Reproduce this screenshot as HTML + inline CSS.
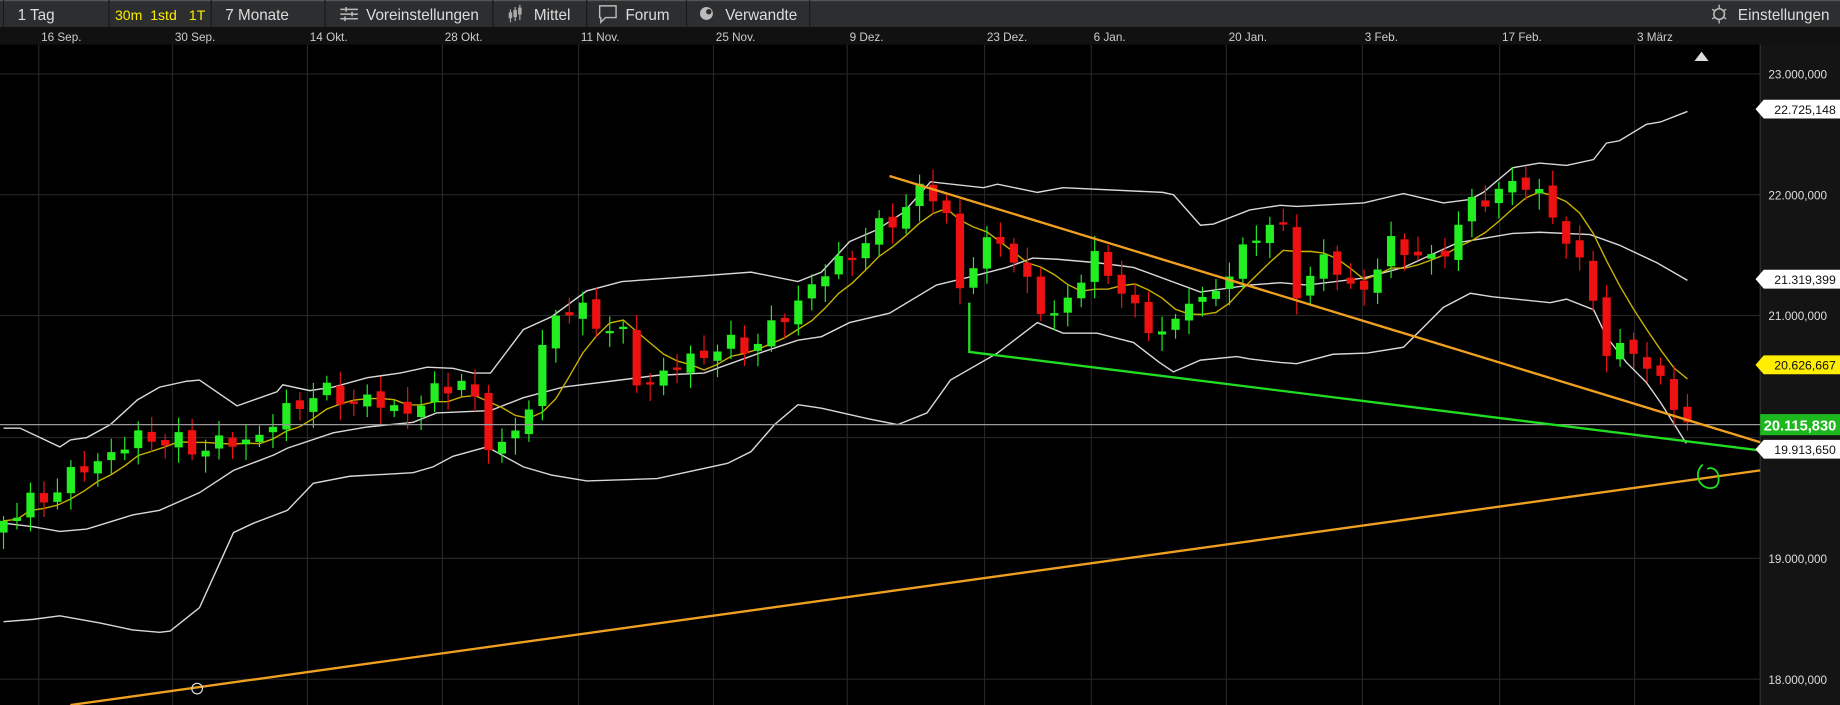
<!DOCTYPE html>
<html><head><meta charset="utf-8"><style>
html,body{margin:0;padding:0;background:#000;width:1840px;height:705px;overflow:hidden}
svg{display:block}
text{font-family:"Liberation Sans",sans-serif}
</style></head><body>
<svg id="s" width="1840" height="705" viewBox="0 0 1568 601" preserveAspectRatio="none" xmlns="http://www.w3.org/2000/svg">
<rect x="0" y="0" width="1568" height="601" fill="#000"/>
<rect x="0" y="0" width="1568" height="23" fill="#2c2e30"/>
<rect x="0" y="0" width="1568" height="1" fill="#555"/>
<rect x="0" y="23" width="1568" height="15" fill="#111"/>
<rect x="1500" y="38" width="68" height="563" fill="#141414"/>
<line x1="1500" y1="38" x2="1500" y2="601" stroke="#333" stroke-width="1"/>
<g id="grid" stroke="#262626" stroke-width="1"></g>
<g font-size="13" fill="#ddd">
<line x1="3" y1="0" x2="3" y2="23" stroke="#1a1a1a"/>
<text x="15" y="17">1 Tag</text>
<line x1="93" y1="0" x2="93" y2="23" stroke="#1a1a1a"/>
<text x="98" y="17" fill="#ffee00" font-size="12">30m</text>
<text x="128" y="17" fill="#ffee00" font-size="12">1std</text>
<text x="161" y="17" fill="#ffee00" font-size="12">1T</text>
<line x1="180" y1="0" x2="180" y2="23" stroke="#1a1a1a"/>
<text x="192" y="17">7 Monate</text>
<line x1="277" y1="0" x2="277" y2="23" stroke="#1a1a1a"/>
<g stroke="#bbb" stroke-width="1.3"><line x1="290" y1="8" x2="305" y2="8"/><line x1="290" y1="12" x2="305" y2="12"/><line x1="290" y1="16" x2="305" y2="16"/><line x1="295" y1="6" x2="295" y2="10"/><line x1="300" y1="10" x2="300" y2="14"/><line x1="294" y1="14" x2="294" y2="18"/></g>
<text x="312" y="17">Voreinstellungen</text>
<line x1="420" y1="0" x2="420" y2="23" stroke="#1a1a1a"/>
<g stroke="#aaa" stroke-width="1"><line x1="435" y1="8" x2="435" y2="19"/><line x1="439" y1="6" x2="439" y2="18"/><line x1="443" y1="4" x2="443" y2="17"/><rect x="434" y="11" width="2" height="4" fill="#aaa"/><rect x="438" y="9" width="2" height="5" fill="#aaa"/><rect x="442" y="7" width="2" height="5" fill="#aaa"/></g>
<text x="455" y="17">Mittel</text>
<line x1="500" y1="0" x2="500" y2="23" stroke="#1a1a1a"/>
<path d="M511 5h14v10h-9l-4 4v-4h-1z" fill="none" stroke="#bbb" stroke-width="1.2"/>
<text x="533" y="17">Forum</text>
<line x1="585" y1="0" x2="585" y2="23" stroke="#1a1a1a"/>
<circle cx="602" cy="11.5" r="5.5" fill="#bbb"/><circle cx="604" cy="10" r="2.3" fill="#2c2e30"/>
<text x="618" y="17">Verwandte</text>
<line x1="690" y1="0" x2="690" y2="23" stroke="#1a1a1a"/>
<circle cx="1465" cy="12" r="4.5" fill="none" stroke="#bbb" stroke-width="1.3"/>
<g stroke="#bbb" stroke-width="1.2"><line x1="1465" y1="4" x2="1465" y2="7"/><line x1="1465" y1="17" x2="1465" y2="20"/><line x1="1459" y1="8" x2="1461" y2="9"/><line x1="1469" y1="15" x2="1471" y2="16"/><line x1="1459" y1="16" x2="1461" y2="15"/><line x1="1469" y1="9" x2="1471" y2="8"/></g>
<text x="1481" y="17">Einstellungen</text>
</g>
<g id="dates" font-size="10" fill="#ccc"></g>
<g id="ax" font-size="10" fill="#ddd"></g>
<g id="ind" fill="none"></g>
<g id="cd"></g>
<g id="ov"></g>
</svg>
<script>
(function(){
var NS="http://www.w3.org/2000/svg";
function el(p,t,a,txt){var e=document.createElementNS(NS,t);for(var k in a)e.setAttribute(k,a[k]);if(txt)e.textContent=txt;document.getElementById(p).appendChild(e);return e;}
var dates=[[35,"16 Sep."],[149,"30 Sep."],[264,"14 Okt."],[379,"28 Okt."],[495,"11 Nov."],[610,"25 Nov."],[724,"9 Dez."],[841,"23 Dez."],[932,"6 Jan."],[1047,"20 Jan."],[1163,"3 Feb."],[1280,"17 Feb."],[1395,"3 März"]];
dates.forEach(function(d){el("dates","text",{x:d[0],y:35},d[1]);el("grid","line",{x1:d[0]-2,y1:38,x2:d[0]-2,y2:601});});
var py=[[63,"23.000,000"],[166,"22.000,000"],[269,"21.000,000"],[476,"19.000,000"],[579,"18.000,000"]];
el("grid","line",{x1:0,y1:373,x2:1500,y2:373});
py.forEach(function(p){el("grid","line",{x1:0,y1:p[0],x2:1500,y2:p[0]});el("ax","text",{x:1507,y:p[0]+4},p[1]);});
var kp=[[3,440],[20,435],[70,400],[125,370],[160,382],[215,375],[265,335],[330,345],[345,352],[395,320],[415,378],[445,370],[470,265],[500,268],[530,285],[545,330],[600,300],[650,290],[695,240],[745,200],[785,163],[805,170],[815,250],[850,195],[880,255],[905,270],[932,215],[970,270],[1000,288],[1010,250],[1035,255],[1060,210],[1090,185],[1105,245],[1135,220],[1160,255],[1185,205],[1220,225],[1255,175],[1290,155],[1320,170],[1335,210],[1360,250],[1370,310],[1390,290],[1400,315],[1415,320],[1427,350],[1438,360]];
function interp(x){for(var i=0;i<kp.length-1;i++){if(x<=kp[i+1][0]){var t=(x-kp[i][0])/(kp[i+1][0]-kp[i][0]);return kp[i][1]+t*(kp[i+1][1]-kp[i][1]);}}return kp[kp.length-1][1];}
var N=126,xs=[],cl=[],i,j;
for(i=0;i<N;i++){var x=3+i*(1435/(N-1));xs.push(x);cl.push(interp(x)+Math.sin(i*2.3)*7+Math.cos(i*1.7)*4);}
cl[N-1]=360;
var op=[cl[0]+10];for(i=1;i<N;i++)op.push(cl[i-1]+Math.sin(i*3.1)*3);
function pts(a){return a.map(function(p){return p[0]+","+p[1];}).join(" ");}
var up=[[3,365],[17,365],[32,372],[51,381],[60,375],[74,373],[94,362],[117,341],[136,330],[159,325],[170,324],[202,346],[236,334],[241,328],[264,333],[284,330],[313,322],[341,318],[364,313],[386,314],[403,318],[418,318],[446,281],[470,270],[500,248],[530,240],[600,235],[640,232],[680,240],[700,232],[724,206],[747,196],[770,181],[793,155],[838,160],[850,157],[884,164],[906,160],[991,164],[1000,166],[1023,192],[1034,191],[1065,179],[1091,175],[1105,176],[1162,173],[1196,165],[1230,173],[1253,170],[1264,164],[1289,143],[1312,139],[1335,141],[1358,136],[1369,122],[1380,120],[1403,106],[1415,104],[1438,95]];
var md=[[3,446],[28,449],[51,453],[74,451],[113,439],[136,435],[170,420],[199,401],[233,388],[245,382],[284,369],[313,364],[352,360],[372,352],[418,350],[446,339],[480,330],[520,325],[560,320],[600,318],[650,300],[680,290],[700,287],[724,275],[758,267],[798,243],[827,236],[858,228],[880,220],[901,221],[935,224],[966,228],[1023,249],[1065,243],[1091,241],[1114,243],[1162,237],[1196,228],[1242,207],[1289,199],[1312,198],[1355,200],[1380,209],[1412,224],[1438,239]];
var lw=[[3,530],[28,528],[51,525],[85,531],[113,537],[136,539],[145,538],[170,518],[199,454],[216,446],[245,435],[267,412],[298,406],[352,403],[369,398],[386,389],[415,381],[446,398],[470,405],[500,410],[560,408],[620,395],[640,385],[660,362],[680,345],[700,348],[740,357],[765,362],[790,352],[810,324],[850,301],[884,275],[906,284],[935,284],[966,292],[988,309],[1000,317],[1023,307],[1054,304],[1065,306],[1091,309],[1105,310],[1136,302],[1165,301],[1196,296],[1230,262],[1253,250],[1272,253],[1321,258],[1335,255],[1358,264],[1369,287],[1386,309],[1403,326],[1415,343],[1437,378]];
[up,md,lw].forEach(function(a){el("ind","polyline",{points:pts(a),stroke:"#d8d8d8","stroke-width":1.2});});
var sm=[];for(i=0;i<N;i++){var kk=Math.min(6,i+1),s2=0;for(j=i-kk+1;j<=i;j++)s2+=cl[j];sm.push([xs[i].toFixed(1),(s2/kk).toFixed(1)]);}
el("ind","polyline",{points:pts(sm),stroke:"#c8b000","stroke-width":1.2});
for(i=0;i<N;i++){var o=op[i],c=cl[i],g=c<o,col=g?"#22ee22":"#ee1111";var tp=Math.min(o,c),bt=Math.max(o,c);if(bt-tp<2){bt=tp+2;}
var wh=tp-4-Math.abs(Math.sin(i*1.3))*9,wl=bt+4+Math.abs(Math.cos(i*1.9))*10;
el("cd","line",{x1:xs[i],y1:wh,x2:xs[i],y2:wl,stroke:col,"stroke-width":1});
el("cd","rect",{x:xs[i]-3.5,y:tp,width:7,height:bt-tp,fill:col});}
el("ov","line",{x1:0,y1:362,x2:1500,y2:362,stroke:"#999","stroke-width":1});
el("ov","line",{x1:758,y1:150,x2:1500,y2:377,stroke:"#f0a020","stroke-width":2});
el("ov","polyline",{points:"826,258 826,300 1500,384",stroke:"#22dd22","stroke-width":2,fill:"none"});
el("ov","line",{x1:60,y1:601,x2:1500,y2:401,stroke:"#f0a020","stroke-width":2});
el("ov","circle",{cx:168,cy:587,r:4.5,stroke:"#ddd","stroke-width":1,fill:"none"});
el("ov","path",{d:"M1451 396 C1444 402 1446 414 1456 416 C1463 417 1466 412 1464 404 C1462 399 1457 398 1455 400",stroke:"#22dd22","stroke-width":1.5,fill:"none"});
el("ov","path",{d:"M1444 52 L1450 44 L1456 52 Z",fill:"#ddd"});
function lab(y,t,bg,fg){el("ov","path",{d:"M1496 "+y+" L1503 "+(y-8)+" L1568 "+(y-8)+" L1568 "+(y+8)+" L1503 "+(y+8)+" Z",fill:bg});el("ov","text",{x:1512,y:y+4,fill:fg,"font-size":10.5},t);}
lab(93,"22.725,148","#fff","#111");
lab(238,"21.319,399","#fff","#111");
lab(311,"20.626,667","#ffee00","#111");
el("ov","rect",{x:1500,y:353,width:68,height:18,fill:"#1db81d"});
el("ov","text",{x:1503,y:367,fill:"#fff","font-size":12.5,"font-weight":"bold"},"20.115,830");
lab(383,"19.913,650","#fff","#111");
})();
</script>
</body></html>
